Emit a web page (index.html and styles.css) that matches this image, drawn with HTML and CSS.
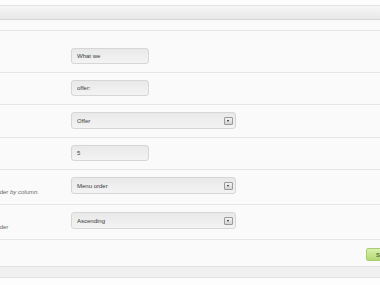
FILE: index.html
```html
<!DOCTYPE html>
<html lang="en">
<head>
    <meta charset="UTF-8">
    <title>Module settings</title>
    <link rel="stylesheet" href="styles.css">
</head>
<body>
    <div class="page">
        <div class="toolbar"></div>
        <div class="subbar"></div>

        <div class="form">
            <div class="row">
                <div class="row-label"></div>
                <div class="row-field"><input class="text-input" type="text" value="What we"></div>
            </div>
            <div class="row">
                <div class="row-label"></div>
                <div class="row-field"><input class="text-input" type="text" value="offer:"></div>
            </div>
            <div class="row">
                <div class="row-label"></div>
                <div class="row-field">
                    <div class="select"><span class="select-value">Offer</span><span class="select-arrow"></span></div>
                </div>
            </div>
            <div class="row">
                <div class="row-label"></div>
                <div class="row-field"><input class="text-input" type="text" value="5"></div>
            </div>
            <div class="row">
                <div class="row-label"><p class="row-desc">Order <em>by column.</em></p></div>
                <div class="row-field">
                    <div class="select"><span class="select-value">Menu order</span><span class="select-arrow"></span></div>
                </div>
            </div>
            <div class="row">
                <div class="row-label"><p class="row-desc">Order</p></div>
                <div class="row-field">
                    <div class="select"><span class="select-value">Ascending</span><span class="select-arrow"></span></div>
                </div>
            </div>
        </div>

        <div class="actions">
            <button class="btn-save" type="button">Save</button>
        </div>
        <div class="footer-bar"></div>
    </div>
</body>
</html>
```

FILE: styles.css
```css
* {
    margin: 0;
    padding: 0;
    box-sizing: border-box;
}

body {
    font-family: 'Liberation Sans', Arial, sans-serif;
    font-size: 6px;
    color: #444;
    background: #fdfdfd;
    overflow: hidden;
}

.page {
    width: 412px;
    margin-left: -7px;
    padding-top: 5px;
}

.toolbar {
    height: 15px;
    border-top: 1px solid #e2e2e2;
    border-bottom: 1px solid #d6d6d6;
    background: linear-gradient(#f6f6f6, #e8e8e8);
}

.subbar {
    height: 11px;
    background: #fafafa;
    border-bottom: 1px solid #e6e6e6;
}

.form {
    padding-top: 10px;
    background: #fafafa;
}

.row {
    display: flex;
    align-items: flex-start;
    padding: 7px 0 8px;
    border-bottom: 1px solid #e6e6e6;
}

.row-label {
    width: 78px;
    flex-shrink: 0;
}

.row-desc {
    padding-top: 11px;
    line-height: 8px;
    font-size: 6px;
    color: #666;
}

.row-desc em {
    font-style: italic;
}

.text-input {
    display: block;
    width: 78px;
    height: 16px;
    padding: 0 5px;
    border: 1px solid #d6d6d6;
    border-radius: 3px;
    background: linear-gradient(#e9e9e9, #f3f3f3);
    font-family: inherit;
    font-size: 6px;
    color: #3a3a3a;
    outline: none;
}

.select {
    display: flex;
    align-items: center;
    justify-content: space-between;
    width: 165px;
    height: 17px;
    padding: 0 2px 0 5px;
    border: 1px solid #d6d6d6;
    border-radius: 3px;
    background: linear-gradient(#e9e9e9, #f3f3f3);
}

.select-value {
    font-size: 6px;
    color: #3a3a3a;
}

.select-arrow {
    position: relative;
    width: 9px;
    height: 8px;
    border: 1px solid #9a9a9a;
    border-radius: 1px;
    background: linear-gradient(#f2f2f2, #d4d4d4);
}

.select-arrow::after {
    content: "";
    position: absolute;
    left: 2px;
    top: 2px;
    border-left: 1.5px solid transparent;
    border-right: 1.5px solid transparent;
    border-top: 2px solid #222;
}

.actions {
    display: flex;
    justify-content: flex-end;
    padding: 8px 5px 5px 0;
    background: #fafafa;
}

.btn-save {
    height: 13px;
    padding: 0 9px;
    border: 1px solid #a9cd72;
    border-radius: 2px;
    background: linear-gradient(#d9f0ae, #b2d874);
    font-family: inherit;
    font-size: 6px;
    font-weight: bold;
    color: #56682f;
}

.footer-bar {
    height: 12px;
    border-top: 1px solid #e0e0e0;
    border-bottom: 1px solid #e2e2e2;
    background: #f0f0f0;
}
```
